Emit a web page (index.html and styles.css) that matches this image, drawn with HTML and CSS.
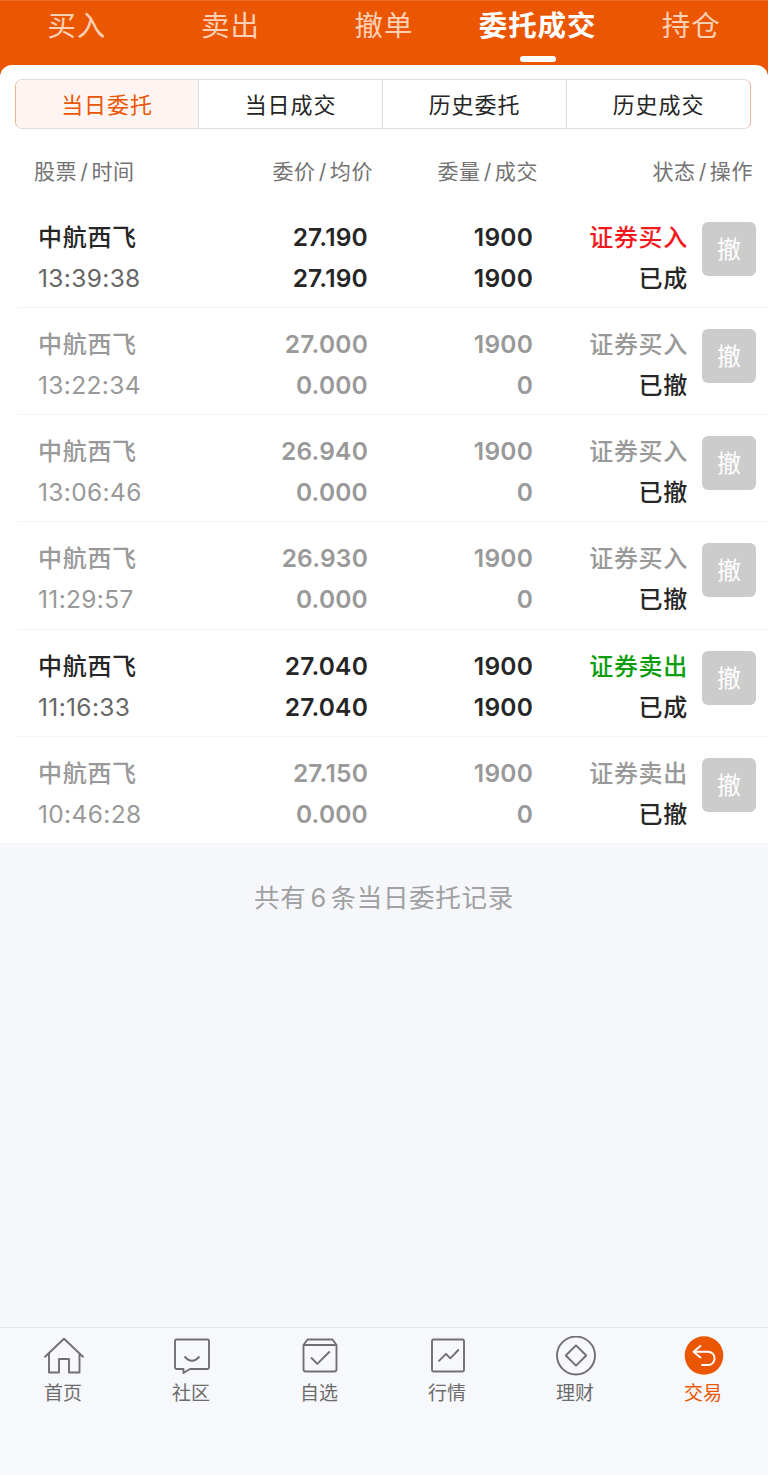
FILE: index.html
```html
<!DOCTYPE html>
<html lang="zh-CN">
<head>
<meta charset="utf-8">
<title>委托成交</title>
<link rel="stylesheet" href="styles.css">
</head>
<body>
<div class="app">
  <header class="top">
    <nav class="tabs">
      <a class="tab">买入</a>
      <a class="tab">卖出</a>
      <a class="tab">撤单</a>
      <a class="tab tab-active">委托成交</a>
      <a class="tab">持仓</a>
    </nav>
  </header>
  <main class="sheet">
    <div class="segments">
      <span class="segment segment-active">当日委托</span>
      <span class="segment">当日成交</span>
      <span class="segment">历史委托</span>
      <span class="segment">历史成交</span>
    </div>
    <div class="columns">
      <span>股票<i>/</i>时间</span>
      <span>委价<i>/</i>均价</span>
      <span>委量<i>/</i>成交</span>
      <span>状态<i>/</i>操作</span>
    </div>
    <section class="orders">
      <article class="order">
        <div class="stock"><b>中航西飞</b><time>13:39:38</time></div>
        <div class="num"><span>27.190</span><span>27.190</span></div>
        <div class="num"><span>1900</span><span>1900</span></div>
        <div class="state"><span class="buy">证券买入</span><span class="status">已成</span></div>
        <button class="cancel">撤</button>
      </article>
      <article class="order muted">
        <div class="stock"><b>中航西飞</b><time>13:22:34</time></div>
        <div class="num"><span>27.000</span><span>0.000</span></div>
        <div class="num"><span>1900</span><span>0</span></div>
        <div class="state"><span>证券买入</span><span class="status">已撤</span></div>
        <button class="cancel">撤</button>
      </article>
      <article class="order muted">
        <div class="stock"><b>中航西飞</b><time>13:06:46</time></div>
        <div class="num"><span>26.940</span><span>0.000</span></div>
        <div class="num"><span>1900</span><span>0</span></div>
        <div class="state"><span>证券买入</span><span class="status">已撤</span></div>
        <button class="cancel">撤</button>
      </article>
      <article class="order muted">
        <div class="stock"><b>中航西飞</b><time>11:29:57</time></div>
        <div class="num"><span>26.930</span><span>0.000</span></div>
        <div class="num"><span>1900</span><span>0</span></div>
        <div class="state"><span>证券买入</span><span class="status">已撤</span></div>
        <button class="cancel">撤</button>
      </article>
      <article class="order">
        <div class="stock"><b>中航西飞</b><time>11:16:33</time></div>
        <div class="num"><span>27.040</span><span>27.040</span></div>
        <div class="num"><span>1900</span><span>1900</span></div>
        <div class="state"><span class="sell">证券卖出</span><span class="status">已成</span></div>
        <button class="cancel">撤</button>
      </article>
      <article class="order muted">
        <div class="stock"><b>中航西飞</b><time>10:46:28</time></div>
        <div class="num"><span>27.150</span><span>0.000</span></div>
        <div class="num"><span>1900</span><span>0</span></div>
        <div class="state"><span>证券卖出</span><span class="status">已撤</span></div>
        <button class="cancel">撤</button>
      </article>
    </section>
  </main>
  <p class="summary">共有<span class="count">6</span>条当日委托记录</p>
  <nav class="bottom">
    <a class="item">
      <svg class="icon" viewBox="0 0 44 44"><path d="M2.500 21.300 22 2.800l19.500 18.500M7 17.500V36.500H17V23H27V36.500H37.500V17.500"/></svg>
      <span>首页</span>
    </a>
    <a class="item">
      <svg class="icon" viewBox="0 0 44 44"><path d="M6.500 3.500H37.500Q39 3.500 39 5V31.500Q39 33 37.500 33H20L13.500 37V33H6.500Q5 33 5 31.500V5Q5 3.500 6.500 3.500ZM14.500 20.500Q22 29 29.500 20.500"/></svg>
      <span>社区</span>
    </a>
    <a class="item">
      <svg class="icon" viewBox="0 0 44 44"><path d="M9.500 3.500H34.500L38.500 9V33Q38.500 35.500 36.500 35.500H7.500Q5.500 35.500 5.500 33V9ZM5.500 9H38.500M13 21.500 19.300 27.800 31.700 15.500"/></svg>
      <span>自选</span>
    </a>
    <a class="item">
      <svg class="icon" viewBox="0 0 44 44"><rect x="6" y="3.500" width="32" height="32" rx="1.500"/><path d="M12.500 25.300 20 17.800 24.300 22.300 32.800 13.500"/></svg>
      <span>行情</span>
    </a>
    <a class="item">
      <svg class="icon" viewBox="0 0 44 44"><circle cx="22" cy="19.500" r="19"/><path d="M22 9.300 32.200 19.500 22 29.700 11.800 19.500Z"/></svg>
      <span>理财</span>
    </a>
    <a class="item item-active">
      <svg class="icon" viewBox="0 0 44 44"><circle class="disc" cx="22" cy="19.500" r="19.300"/><path class="arrow" d="M19 9.500 11.500 15.700 19 21.900M11.500 15.700H26A6.650 6.650 0 0 1 26 29H19.300"/></svg>
      <span>交易</span>
    </a>
  </nav>
</div>
</body>
</html>
```
FILE: styles.css
```css
* { box-sizing: border-box; }

body {
  margin: 0;
  background: #f6f7fa;
  font-family: Inter, "Noto Sans CJK SC", sans-serif;
  color: #262626;
}

.app {
  display: flex;
  flex-direction: column;
  width: 768px;
  height: 1475px;
  background: linear-gradient(#eb5603 100px, #f6f7fa 100px);
}

.top { height: 65px; border-top: 1px solid #ec6a22; }

.tabs { display: grid; grid-template-columns: repeat(5, 1fr); }

.tab {
  display: flex;
  flex-direction: column;
  align-items: center;
  height: 64px;
  padding-top: 1px;
  font-size: 28.500px;
  line-height: 48px;
  font-weight: 400;
  letter-spacing: 0.900px;
  white-space: nowrap;
  color: #ffd0b5;
}

.tab-active { font-weight: 700; color: #fff; }

.tab-active::after {
  content: "";
  width: 36px;
  height: 6px;
  margin-top: 5.500px;
  border-radius: 3px;
  background: #fff;
}

.sheet {
  height: 778px;
  padding-top: 14px;
  border-radius: 12px 12px 0 0;
  background: #fff;
}

.segments {
  display: grid;
  grid-template-columns: 182px 184px 184px 1fr;
  height: 50px;
  margin: 0 17px 0 15px;
  border: 1px solid #dddde3;
  border-radius: 7px;
  border-left-color: #f0b498;
  border-right-color: #f0b498;
  overflow: hidden;
}

.segment {
  font-size: 22px;
  line-height: 50px;
  letter-spacing: 0.900px;
  text-align: center;
}

.segment + .segment { border-left: 1px solid #dddde3; }

.segment-active { color: #eb5603; background: #fef5f2; }

.columns {
  display: grid;
  grid-template-columns: 140px 199px 165px 215px;
  height: 71.500px;
  padding: 0 15px 0 34px;
  font-size: 21px;
  line-height: 85px;
  letter-spacing: 0.600px;
  color: #737373;
}

.columns span { text-align: right; }
.columns span:first-child { text-align: left; }
.columns i { margin: 0 3px; font-style: normal; }

.order {
  display: grid;
  grid-template-columns: 141px 189px 165px 155px 54px;
  height: 107.250px;
  margin-left: 18px;
  padding: 16px 0 0 20px;
  border-bottom: 1px solid #f4f4f5;
  font-size: 24px;
  line-height: 41px;
  letter-spacing: 0.700px;
}

.order:last-child { border-bottom: 0; }

.stock, .num, .state { display: flex; flex-direction: column; }
.num, .state { align-items: flex-end; }
.num { font-size: 24.500px; font-weight: 600; letter-spacing: 0.200px; }
.state { font-weight: 500; }
.stock b { font-weight: 500; }
.stock time { font-size: 24.500px; font-weight: 400; color: #666; letter-spacing: 0.350px; }

.muted, .muted time { color: #999; }
.buy { color: #f5191e; }
.sell { color: #0b9d0b; }
.status { color: #262626; }

.cancel {
  width: 54px;
  height: 54px;
  margin: 5px 0 0 14px;
  padding: 0 0 2px;
  border: 0;
  border-radius: 6px;
  background: #ccc;
  color: #fff;
  font: 400 24px/50px "Noto Sans CJK SC", sans-serif;
}

.summary {
  flex: 1;
  margin: 0;
  padding-top: 34px;
  font-size: 25.500px;
  font-weight: 400;
  line-height: 42px;
  letter-spacing: 0.700px;
  text-align: center;
  color: #a0a0a2;
}

.count { margin: 0 3.500px 0 4px; }

.bottom {
  display: grid;
  grid-template-columns: repeat(6, 128px);
  height: 148px;
  padding-top: 8px;
  border-top: 1px solid #e4e5e8;
  background: #f7f8fb;
}

.item {
  display: flex;
  flex-direction: column;
  align-items: center;
  font-size: 19px;
  line-height: 28px;
  color: #6b6b6b;
}

.item span { margin-right: 2px; }

.icon {
  width: 44px;
  height: 44px;
  fill: none;
  stroke: #707070;
  stroke-width: 1.900;
  stroke-linejoin: round;
}

.item-active { color: #eb5603; }
.disc { fill: #eb5603; stroke: none; }
.arrow { stroke: #fff; }
```
